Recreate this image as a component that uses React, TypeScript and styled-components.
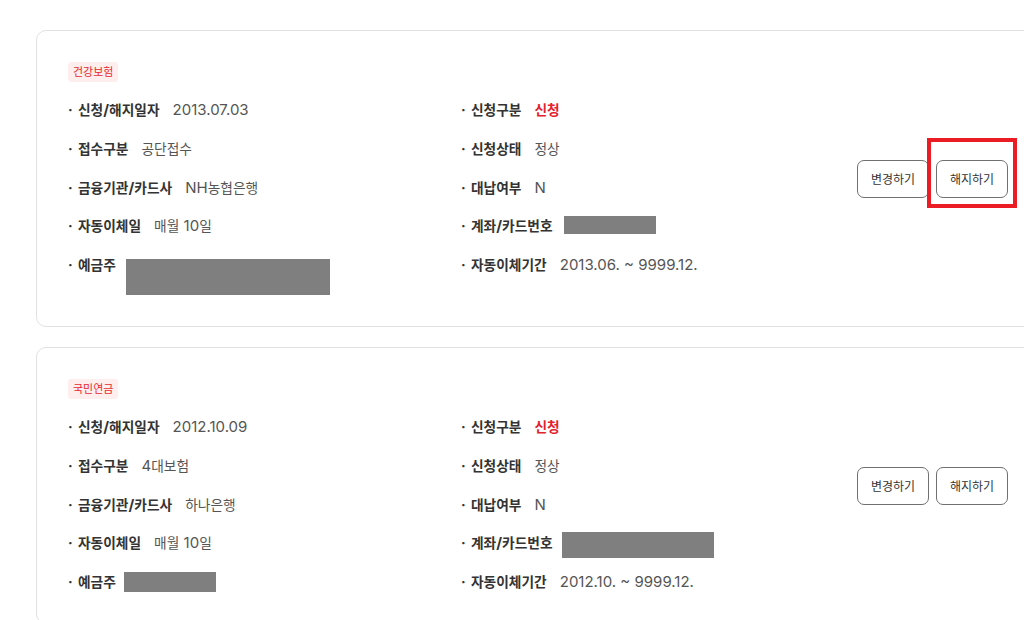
import React from "react";
import styled, { createGlobalStyle } from "styled-components";

const Global = createGlobalStyle`
  html, body { margin: 0; padding: 0; overflow: hidden; background: #ffffff; }
  body { font-family: "Inter", "Noto Sans CJK KR", sans-serif; -webkit-font-smoothing: antialiased; }
`;

const Page = styled.div`
  display: flex;
  flex-direction: column;
  gap: 20px;
  padding: 30px 0 0 36px;
  width: 1004px;
`;

const Card = styled.section`
  box-sizing: border-box;
  width: 1004px;
  display: flex;
  align-items: center;
  border: 1px solid #e1e1e1;
  border-radius: 10px;
  padding: 31px;
  background: #fff;
`;

const Info = styled.div`
  flex: 1;
  display: flex;
  flex-direction: column;
  align-items: flex-start;
`;

const Tag = styled.span`
  display: inline-block;
  height: 20px;
  line-height: 20px;
  padding: 0 5px;
  border-radius: 3px;
  background: #ffeeee;
  color: #e62a31;
  font-size: 12px;
  margin-bottom: 18px;
`;

const Grid = styled.div`
  display: grid;
  grid-template-columns: 393px 1fr;
  row-gap: 18.75px;
  width: 100%;
`;

const Row = styled.div`
  display: flex;
  align-items: flex-start;
  font-size: 15px;
  line-height: 20px;
  white-space: nowrap;
`;

const Bullet = styled.span`
  width: 10px;
  flex: none;
  color: #333;
  font-weight: 700;
  font-size: 14px;
`;

const Label = styled.span`
  color: #333;
  font-weight: 700;
  margin-right: 13px;
`;

const Value = styled.span<{ $red?: boolean }>`
  color: ${(p) => (p.$red ? "#e3232b" : "#555555")};
  font-weight: ${(p) => (p.$red ? 700 : 400)};
`;

const Ko = styled.span`
  font-family: "Noto Sans CJK KR", sans-serif;
  font-size: 0.915em;
  line-height: 1;
`;

const Masked = styled.span<{ $w: number; $h: number; $mt: number; $mb: number; $ml: number }>`
  display: block;
  flex: none;
  background: #7f7f7f;
  width: ${(p) => p.$w}px;
  height: ${(p) => p.$h}px;
  margin: ${(p) => `${p.$mt}px 0 ${p.$mb}px ${p.$ml}px`};
`;

const Actions = styled.div`
  display: flex;
  gap: 7px;
  align-self: center;
  flex: none;
`;

const HighlightWrap = styled.div`
  position: relative;
  display: flex;
`;

const Highlight = styled.span`
  position: absolute;
  left: -9px;
  top: -22px;
  right: -9px;
  bottom: -10px;
  border: 4px solid #ec1c24;
  pointer-events: none;
`;

const Button = styled.button`
  box-sizing: border-box;
  width: 72px;
  height: 38px;
  padding: 0;
  border: 1px solid #707070;
  border-radius: 7px;
  background: #fff;
  color: #333;
  font-family: inherit;
  font-size: 13.1px;
  cursor: pointer;
`;

const hangul = /([\uAC00-\uD7A3\u3131-\u318E]+)/;

function T({ s }: { s: string }) {
  return (
    <>
      {s.split(hangul).map((part, i) =>
        hangul.test(part) ? <Ko key={i}>{part}</Ko> : <React.Fragment key={i}>{part}</React.Fragment>
      )}
    </>
  );
}

type Mask = { w: number; h: number; mt: number; mb: number; ml: number };
type Item = { label: string; value?: string; red?: boolean; mask?: Mask };

type CardData = {
  tag: string;
  left: Item[];
  right: Item[];
  highlight?: boolean;
};

const cards: CardData[] = [
  {
    tag: "건강보험",
    highlight: true,
    left: [
      { label: "신청/해지일자", value: "2013.07.03" },
      { label: "접수구분", value: "공단접수" },
      { label: "금융기관/카드사", value: "NH농협은행" },
      { label: "자동이체일", value: "매월 10일" },
      { label: "예금주", mask: { w: 204, h: 36, mt: 4, mb: 0, ml: -3 } },
    ],
    right: [
      { label: "신청구분", value: "신청", red: true },
      { label: "신청상태", value: "정상" },
      { label: "대납여부", value: "N" },
      { label: "계좌/카드번호", mask: { w: 92, h: 18, mt: 0, mb: 0, ml: -2 } },
      { label: "자동이체기간", value: "2013.06. ~ 9999.12." },
    ],
  },
  {
    tag: "국민연금",
    left: [
      { label: "신청/해지일자", value: "2012.10.09" },
      { label: "접수구분", value: "4대보험" },
      { label: "금융기관/카드사", value: "하나은행" },
      { label: "자동이체일", value: "매월 10일" },
      { label: "예금주", mask: { w: 92, h: 20, mt: 0, mb: 0, ml: -5 } },
    ],
    right: [
      { label: "신청구분", value: "신청", red: true },
      { label: "신청상태", value: "정상" },
      { label: "대납여부", value: "N" },
      { label: "계좌/카드번호", mask: { w: 152, h: 26, mt: -1, mb: -5, ml: -4 } },
      { label: "자동이체기간", value: "2012.10. ~ 9999.12." },
    ],
  },
];

function InfoRow({ item }: { item: Item }) {
  return (
    <Row>
      <Bullet>·</Bullet>
      <Label>
        <T s={item.label} />
      </Label>
      {item.mask ? (
        <Masked $w={item.mask.w} $h={item.mask.h} $mt={item.mask.mt} $mb={item.mask.mb} $ml={item.mask.ml} />
      ) : (
        <Value $red={item.red}>
          <T s={item.value ?? ""} />
        </Value>
      )}
    </Row>
  );
}

function AccountCard({ data }: { data: CardData }) {
  const rows: Item[] = [];
  data.left.forEach((l, i) => {
    rows.push(l);
    rows.push(data.right[i]);
  });
  return (
    <Card>
      <Info>
        <Tag>
          <T s={data.tag} />
        </Tag>
        <Grid>
          {rows.map((it, i) => (
            <InfoRow key={i} item={it} />
          ))}
        </Grid>
      </Info>
      <Actions>
        <Button>
          <T s="변경하기" />
        </Button>
        {data.highlight ? (
          <HighlightWrap>
            <Button>
              <T s="해지하기" />
            </Button>
            <Highlight />
          </HighlightWrap>
        ) : (
          <Button>
            <T s="해지하기" />
          </Button>
        )}
      </Actions>
    </Card>
  );
}

export default function App() {
  return (
    <>
      <Global />
      <Page>
        {cards.map((c, i) => (
          <AccountCard key={i} data={c} />
        ))}
      </Page>
    </>
  );
}
